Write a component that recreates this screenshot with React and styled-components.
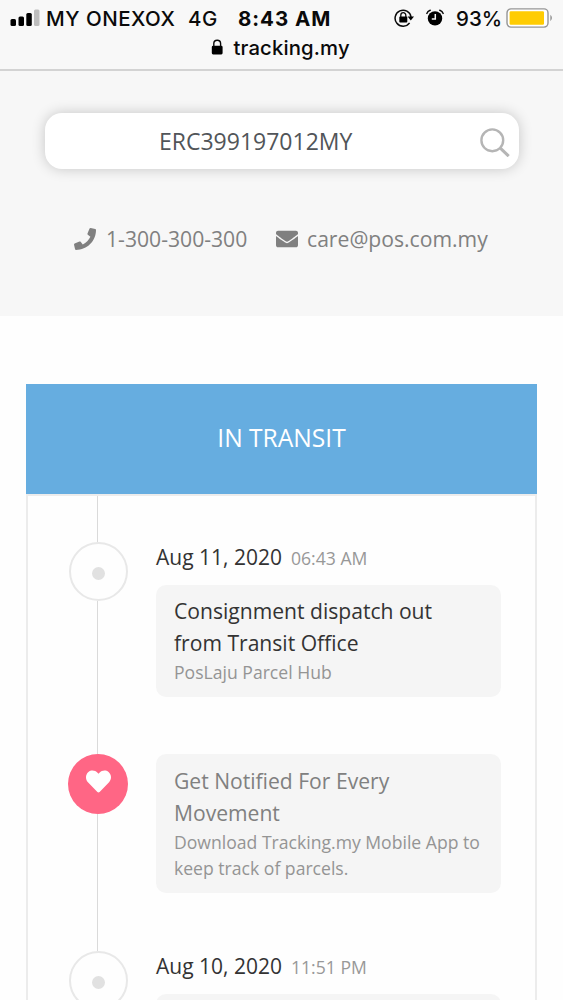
import React from 'react';
import styled, { createGlobalStyle } from 'styled-components';
import { FaPhone, FaEnvelope, FaHeart } from 'react-icons/fa';

const GlobalStyle = createGlobalStyle`
  * {
    box-sizing: border-box;
  }
  body {
    margin: 0;
    background-color: #fff;
    font-family: 'Open Sans', 'Noto Sans', sans-serif;
  }
`;

const Screen = styled.div`
  width: 563px;
  height: 1000px;
  overflow: hidden;
  background-color: #fefefe;
`;

// BROWSER BAR
const BrowserBar = styled.header`
  height: 71px;
  background-color: #f8f8f8;
  border-bottom: 2px solid #d3d3d3;
  color: #0a0a0a;
  font-family: Inter, 'Liberation Sans', sans-serif;
`;

const StatusBar = styled.div`
  display: flex;
  align-items: center;
  height: 35px;
  padding: 1px 9px 0 10px;
  white-space: nowrap;
`;

const StatusText = styled.span`
  flex: none;
  width: ${(props) => props.$width}px;
  margin-left: ${(props) => props.$gap}px;
  font-size: 20.5px;
  font-weight: ${(props) => (props.$bold ? 700 : 500)};
  letter-spacing: ${(props) => props.$spacing || 0}px;
`;

const StatusIcon = styled.svg`
  flex: none;
  display: block;
  margin-left: ${(props) => props.$gap || 0}px;
`;

const AddressBar = styled.div`
  display: flex;
  align-items: center;
  height: 24px;
  padding-left: 211px;
`;

const Address = styled.span`
  margin-left: 10.5px;
  font-size: 20.3px;
  font-weight: 500;
  letter-spacing: 0.15px;
`;

// SEARCH
const SearchSection = styled.section`
  height: 245px;
  padding: 42px 44px 0 45px;
  background-color: #f7f7f7;
`;

const SearchBox = styled.div`
  display: flex;
  align-items: center;
  height: 56px;
  padding: 0 8px 0 114px;
  border-radius: 17px;
  background-color: #fff;
  box-shadow: 0 0 14px rgba(0, 0, 0, 0.2);
`;

const TrackingNumber = styled.span`
  flex: 1;
  color: #515559;
  font-size: 23px;
`;

const Contacts = styled.div`
  display: flex;
  align-items: center;
  height: 30px;
  margin-top: 55px;
  padding-left: 29px;
  color: #808080;
  white-space: nowrap;
`;

const Contact = styled.a`
  display: flex;
  align-items: center;
  width: ${(props) => props.$width || 'auto'};
  font-size: 21.15px;
`;

const ContactLabel = styled.span`
  margin-left: ${(props) => props.$gap}px;
  padding-bottom: 2px;
`;

// TRACKING PANEL
const Panel = styled.section`
  width: 511px;
  margin: 68px 0 0 26px;
`;

const PanelHeader = styled.div`
  display: flex;
  align-items: center;
  justify-content: center;
  height: 110px;
  padding-bottom: 3px;
  background-color: #66ade0;
  color: #fff;
  font-size: 24.6px;
`;

const Timeline = styled.div`
  border: 2px solid #ececec;
  border-bottom: 0;
  height: 600px;
`;

const Entry = styled.div`
  display: flex;
  height: ${(props) => props.$height}px;
`;

const Rail = styled.div`
  display: flex;
  flex: none;
  flex-direction: column;
  align-items: center;
  width: 60px;
  margin-left: 40.4px;
`;

const RailLine = styled.div`
  flex: 1;
  width: 1px;
  margin-right: 1px;
  background-color: #dadada;
`;

const Marker = styled.div`
  display: flex;
  flex: none;
  align-items: center;
  justify-content: center;
  width: ${(props) => (props.$pink ? 60 : 59)}px;
  height: ${(props) => (props.$pink ? 60 : 59)}px;
  border: ${(props) => (props.$pink ? '0' : '2px solid #e8e8e8')};
  border-radius: 50%;
  padding-bottom: ${(props) => (props.$pink ? '5px' : '0')};
  padding-top: ${(props) => (props.$pink ? '0' : '4px')};
  background-color: ${(props) => (props.$pink ? '#ff6685' : 'transparent')};
  color: #fff;
`;

const Dot = styled.div`
  width: 13px;
  height: 13px;
  border-radius: 50%;
  background-color: #e1e1e1;
`;

const Content = styled.div`
  width: 345px;
  margin-left: 27.6px;
`;

const DateRow = styled.div`
  display: flex;
  align-items: baseline;
  height: 43px;
  line-height: 30px;
`;

const DateText = styled.span`
  width: 135px;
  color: #333;
  font-size: 21px;
`;

const Time = styled.span`
  color: #989898;
  font-size: 17.6px;
`;

const Bubble = styled.div`
  height: ${(props) => props.$height}px;
  padding: ${(props) => props.$top || 10}px 0 0 18px;
  border-radius: 10px;
  background-color: #f5f5f5;
  white-space: pre-line;
`;

const Title = styled.div`
  color: ${(props) => (props.$muted ? '#808080' : '#333')};
  font-size: 21.1px;
  line-height: 32px;
`;

const Detail = styled.div`
  color: #949494;
  font-size: 17.6px;
  line-height: 26px;
`;

const Signal = () => (
  <StatusIcon width="30" height="18" viewBox="0 0 30 18">
    <rect x="0.5" y="10" width="5.5" height="7" rx="1.5" />
    <rect x="8.5" y="7.5" width="5.5" height="9.5" rx="1.5" />
    <rect x="16.3" y="4" width="5.5" height="13" rx="1.5" />
    <rect x="24" y="0.5" width="5.5" height="16.5" rx="1.5" fill="#bdbdbd" />
  </StatusIcon>
);

const RotationLock = () => (
  <StatusIcon width="20" height="20" viewBox="0 0 20 20">
    <path
      d="M15.6 14.9A8 8 0 1 1 17 9"
      fill="none"
      stroke="#0a0a0a"
      strokeWidth="1.5"
    />
    <path d="M13.6 8.5h6.4l-3.2 4z" />
    <rect x="5.3" y="8.6" width="8" height="6" rx="0.8" />
    <path
      d="M6.8 9V7.2a2.5 2.5 0 0 1 5 0V9"
      fill="none"
      stroke="#0a0a0a"
      strokeWidth="1.3"
    />
  </StatusIcon>
);

const Alarm = () => (
  <StatusIcon width="18" height="18" viewBox="0 0 18 18" $gap={12}>
    <circle cx="9" cy="9.4" r="7.2" />
    <path
      d="M9.3 5v5H5.8"
      fill="none"
      stroke="#f8f8f8"
      strokeWidth="1.5"
    />
    <path
      d="M0.9 4.4Q1.6 2 4.2 1.2M17.1 4.4Q16.4 2 13.8 1.2"
      fill="none"
      stroke="#0a0a0a"
      strokeWidth="1.5"
      strokeLinecap="round"
    />
  </StatusIcon>
);

const Battery = () => (
  <StatusIcon width="48" height="20" viewBox="0 0 48 20">
    <rect
      x="1"
      y="0.9"
      width="41"
      height="18.2"
      rx="4"
      fill="#fff"
      stroke="#969696"
      strokeWidth="1.4"
    />
    <rect x="3.6" y="3.2" width="34.4" height="13.6" rx="1.2" fill="#ffcc02" />
    <path d="M44.3 6.8q3.4 3.2 0 6.4z" fill="#969696" />
  </StatusIcon>
);

const Lock = () => (
  <StatusIcon width="12" height="16" viewBox="0 0 12 16">
    <rect x="0.8" y="6.8" width="10.8" height="8.6" rx="1.3" />
    <path
      d="M2.8 7.5V4.6a3.4 3.4 0 0 1 6.8 0v2.9"
      fill="none"
      stroke="#0a0a0a"
      strokeWidth="1.4"
    />
  </StatusIcon>
);

const SearchIcon = () => (
  <StatusIcon
    width="32"
    height="32"
    viewBox="0 0 32 32"
    fill="none"
    stroke="#b5b5b5"
    strokeWidth="2.4"
  >
    <circle cx="13.3" cy="15.3" r="10.9" />
    <path d="M21.3 23.2l8.4 8" strokeWidth="3" />
  </StatusIcon>
);

const Dated = ({ height, date, time, bubbleHeight, title, detail }) => (
  <Entry $height={height}>
    <Rail>
      <Marker>
        <Dot />
      </Marker>
      <RailLine />
    </Rail>
    <Content>
      <DateRow>
        <DateText>{date}</DateText>
        <Time>{time}</Time>
      </DateRow>
      <Bubble $height={bubbleHeight}>
        {title && <Title>{title}</Title>}
        {detail && <Detail>{detail}</Detail>}
      </Bubble>
    </Content>
  </Entry>
);

export default function App() {
  return (
    <Screen>
      <GlobalStyle />
      <BrowserBar>
        <StatusBar>
          <Signal />
          <StatusText $gap={6} $width={142} $spacing={0.5}>
            MY ONEXOX
          </StatusText>
          <StatusText $gap={0} $width={50} $spacing={0.5}>
            4G
          </StatusText>
          <StatusText $gap={0} $width={156} $spacing={0.95} $bold>
            8:43 AM
          </StatusText>
          <RotationLock />
          <Alarm />
          <StatusText $gap={12} $width={50} $spacing={0}>
            93%
          </StatusText>
          <Battery />
        </StatusBar>
        <AddressBar>
          <Lock />
          <Address>tracking.my</Address>
        </AddressBar>
      </BrowserBar>
      <SearchSection>
        <SearchBox>
          <TrackingNumber>ERC399197012MY</TrackingNumber>
          <SearchIcon />
        </SearchBox>
        <Contacts>
          <Contact $width="202px">
            <FaPhone size={22} />
            <ContactLabel $gap={10}>1-300-300-300</ContactLabel>
          </Contact>
          <Contact>
            <FaEnvelope size={22} />
            <ContactLabel $gap={9}>care@pos.com.my</ContactLabel>
          </Contact>
        </Contacts>
      </SearchSection>
      <Panel>
        <PanelHeader>IN TRANSIT</PanelHeader>
        <Timeline>
          <Entry $height={46}>
            <Rail>
              <RailLine />
            </Rail>
          </Entry>
          <Dated
            height={212}
            date="Aug 11, 2020"
            time="06:43 AM"
            bubbleHeight={112}
            title={'Consignment dispatch out\nfrom Transit Office'}
            detail="PosLaju Parcel Hub"
          />
          <Entry $height={197}>
            <Rail>
              <Marker $pink>
                <FaHeart size={25} />
              </Marker>
              <RailLine />
            </Rail>
            <Content>
              <Bubble $height={139} $top={11}>
                <Title $muted>{'Get Notified For Every\nMovement'}</Title>
                <Detail>
                  {'Download Tracking.my Mobile App to\nkeep track of parcels.'}
                </Detail>
              </Bubble>
            </Content>
          </Entry>
          <Dated
            height={212}
            date="Aug 10, 2020"
            time="11:51 PM"
            bubbleHeight={112}
          />
        </Timeline>
      </Panel>
    </Screen>
  );
}
